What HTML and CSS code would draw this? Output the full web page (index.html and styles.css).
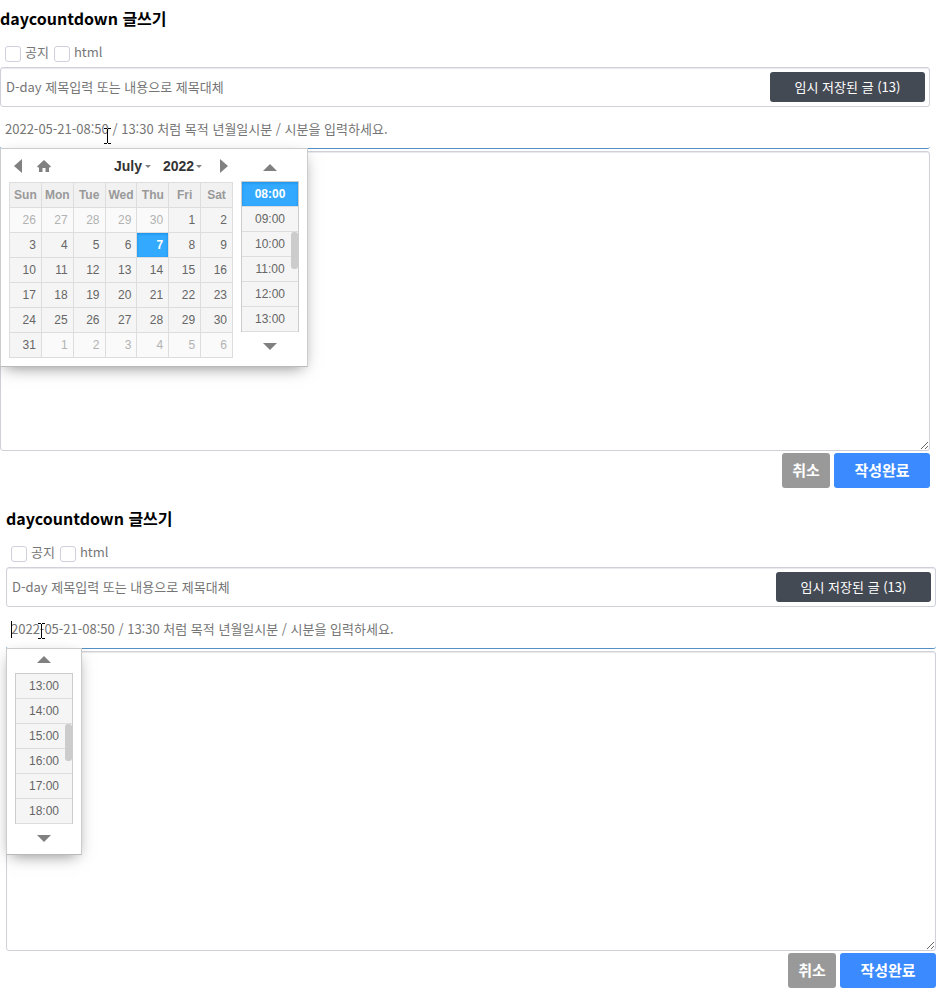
FILE: index.html
```html
<!DOCTYPE html>
<html lang="ko">
<head>
  <meta charset="UTF-8" />
  <meta name="viewport" content="width=device-width, initial-scale=1.0"/>
  <title>daycountdown 글쓰기</title>
  <link rel="stylesheet" href="styles.css">
</head>
<body>

<form class="write-form">
  <h1>daycountdown 글쓰기</h1>

  <div class="options">
    <label><input type="checkbox" name="notice"> 공지</label>
    <label><input type="checkbox" name="html"> html</label>
  </div>

  <div class="subject">
    <input type="text" name="subject" aria-label="제목" placeholder="D-day 제목입력 또는 내용으로 제목대체">
    <button type="button" class="btn-saved">임시 저장된 글 (13)</button>
  </div>

  <div class="date-field">
    <input type="text" name="dday" aria-label="목적 시간" placeholder="2022-05-21-08:50 / 13:30 처럼 목적 년월일시분 / 시분을 입력하세요.">
    <svg class="pointer pointer-date" width="7" height="16" viewBox="0 0 7 16"><path d="M0 .5h3M4 .5h3M3.500 1v14M0 15.500h3M4 15.500h3" stroke="#000" fill="none"/></svg>

    <div class="picker">
      <div class="datepicker">
        <div class="month-bar">
          <button type="button" class="icon-btn" aria-label="Previous month">
            <svg width="8" height="14" viewBox="0 0 8 14"><path d="M8 0v14L0 7z"/></svg>
          </button>
          <button type="button" class="icon-btn home" aria-label="Today">
            <svg width="14" height="12" viewBox="0 0 14 12"><path d="M7 0l7 6.500-1.200 1.200L12 7v5H8.500V8h-3v4H2V7l-.8.7L0 6.500z"/></svg>
          </button>
          <span class="drop month">
            <select aria-label="Month"><option>July</option></select>
            <svg width="6" height="3" viewBox="0 0 6 3"><path d="M0 0h6L3 3z"/></svg>
          </span>
          <span class="drop year">
            <select aria-label="Year"><option>2022</option></select>
            <svg width="6" height="3" viewBox="0 0 6 3"><path d="M0 0h6L3 3z"/></svg>
          </span>
          <button type="button" class="icon-btn next" aria-label="Next month">
            <svg width="8" height="14" viewBox="0 0 8 14"><path d="M0 0v14l8-7z"/></svg>
          </button>
        </div>
        <table class="calendar">
          <thead>
            <tr><th>Sun</th><th>Mon</th><th>Tue</th><th>Wed</th><th>Thu</th><th>Fri</th><th>Sat</th></tr>
          </thead>
          <tbody id="days"></tbody>
        </table>
      </div>
      <div class="timepicker">
        <button type="button" class="icon-btn scroll-btn" aria-label="Earlier">
          <svg width="14" height="7" viewBox="0 0 14 7"><path d="M0 7h14L7 0z"/></svg>
        </button>
        <div class="times" data-from="8" data-current="8"></div>
        <button type="button" class="icon-btn scroll-btn" aria-label="Later">
          <svg width="14" height="7" viewBox="0 0 14 7"><path d="M0 0h14L7 7z"/></svg>
        </button>
      </div>
    </div>
  </div>

  <textarea name="content" aria-label="내용"></textarea>

  <div class="actions">
    <button type="button" class="btn btn-cancel">취소</button>
    <button type="button" class="btn btn-submit">작성완료</button>
  </div>
</form>

<form class="write-form shifted">
  <h1>daycountdown 글쓰기</h1>

  <div class="options">
    <label><input type="checkbox" name="notice"> 공지</label>
    <label><input type="checkbox" name="html"> html</label>
  </div>

  <div class="subject">
    <input type="text" name="subject" aria-label="제목" placeholder="D-day 제목입력 또는 내용으로 제목대체">
    <button type="button" class="btn-saved">임시 저장된 글 (13)</button>
  </div>

  <div class="date-field">
    <input type="text" name="dday" aria-label="목적 시간" placeholder="2022-05-21-08:50 / 13:30 처럼 목적 년월일시분 / 시분을 입력하세요.">
    <span class="caret"></span>
    <svg class="pointer pointer-time" width="7" height="16" viewBox="0 0 7 16"><path d="M0 .5h3M4 .5h3M3.500 1v14M0 15.500h3M4 15.500h3" stroke="#000" fill="none"/></svg>

    <div class="picker time-only">
      <div class="timepicker">
        <button type="button" class="icon-btn scroll-btn" aria-label="Earlier">
          <svg width="14" height="7" viewBox="0 0 14 7"><path d="M0 7h14L7 0z"/></svg>
        </button>
        <div class="times" data-from="13"></div>
        <button type="button" class="icon-btn scroll-btn" aria-label="Later">
          <svg width="14" height="7" viewBox="0 0 14 7"><path d="M0 0h14L7 7z"/></svg>
        </button>
      </div>
    </div>
  </div>

  <textarea name="content" aria-label="내용"></textarea>

  <div class="actions">
    <button type="button" class="btn btn-cancel">취소</button>
    <button type="button" class="btn btn-submit">작성완료</button>
  </div>
</form>

<script>
  function drawCalendar(year, month, current) {
    const body = document.getElementById("days");
    const first = new Date(year, month, 1);
    const last = new Date(year, month + 1, 0).getDate();
    const weeks = Math.ceil((first.getDay() + last) / 7);

    for (let w = 0; w < weeks; w++) {
      const row = body.insertRow();
      for (let d = 0; d < 7; d++) {
        const day = new Date(year, month, 1 - first.getDay() + w * 7 + d);
        const cell = row.insertCell();
        const button = document.createElement("button");
        button.type = "button";
        button.textContent = day.getDate();
        cell.appendChild(button);
        if (day.getMonth() !== month) cell.className = "other";
        else if (day.getDate() === current) cell.className = "current";
      }
    }
  }

  function drawTimes(box) {
    const from = Number(box.dataset.from);
    for (let h = from; h < from + 6; h++) {
      const button = document.createElement("button");
      button.type = "button";
      button.textContent = String(h).padStart(2, "0") + ":00";
      if (h === Number(box.dataset.current)) button.className = "current";
      box.appendChild(button);
    }
    const thumb = document.createElement("span");
    thumb.className = "thumb";
    box.appendChild(thumb);
  }

  drawCalendar(2022, 6, 7);
  document.querySelectorAll(".times").forEach(drawTimes);
</script>

</body>
</html>
```
FILE: styles.css
```css
* {
  box-sizing: border-box;
}

body {
  margin: 0;
  background: #fff;
  color: #777;
  font-family: "Noto Sans CJK KR", sans-serif;
  font-size: 13px;
  line-height: 18px;
}

button,
input,
select,
textarea {
  font: inherit;
  margin: 0;
}

button {
  cursor: pointer;
  border: none;
  padding: 0;
}

.write-form {
  margin-right: 7px;
  padding-bottom: 12px;
}

.write-form.shifted {
  margin-left: 6px;
  margin-right: 1px;
}

h1 {
  margin: 0;
  padding: 6px 0 8px;
  color: #000;
  font-size: 16px;
  line-height: 24px;
}

.options {
  display: flex;
  gap: 5px;
  padding: 5px 5px;
}

.options label {
  display: flex;
  gap: 4px;
}

.options input {
  appearance: none;
  width: 16px;
  height: 16px;
  margin-top: 3px;
  border: 1px solid #cfcfdd;
  border-radius: 3px;
  background: #fff;
}

.subject {
  display: flex;
  align-items: center;
  height: 40px;
  padding: 3px 4px 4px;
  border: 1px solid #d0d0da;
  border-radius: 3px;
  box-shadow: inset 0 1px 1px #e8e8ee;
}

.subject input {
  flex: 1;
  min-width: 0;
  padding: 0 1px;
  border: none;
  outline: none;
  background: none;
}

input::placeholder {
  color: #757575;
}

.btn-saved {
  width: 155px;
  height: 30px;
  border-radius: 3px;
  background: #444a54;
  color: #fff;
}

.date-field {
  position: relative;
  margin: 2px 0;
}

.date-field > input {
  display: block;
  width: 100%;
  height: 40px;
  padding: 0 5px;
  border: none;
  border-bottom: 1px solid #5490c5;
  border-radius: 3px;
  outline: none;
}

textarea {
  display: block;
  width: 100%;
  height: 300px;
  padding: 5px;
  border: 1px solid #d0d0da;
  border-radius: 3px;
  box-shadow: inset 0 1px 1px #e8e8ee;
  outline: none;
  resize: both;
}

.actions {
  display: flex;
  justify-content: flex-end;
  gap: 4px;
  margin-top: 2px;
}

.btn {
  height: 35px;
  padding-bottom: 2px;
  border-radius: 3px;
  color: #fff;
  font-size: 15px;
  font-weight: bold;
}

.btn-cancel {
  width: 48px;
  background: #999;
}

.btn-submit {
  width: 96px;
  background: #3b8aff;
}

/* date / time popup */
.picker {
  position: absolute;
  top: 39px;
  left: 0;
  z-index: 10;
  display: flex;
  gap: 8px;
  padding: 8px;
  border: 1px solid #ccc;
  border-bottom-color: #bbb;
  background: #fff;
  box-shadow: 0 5px 15px -5px rgba(0, 0, 0, 0.5);
  color: #666;
  font-family: "Liberation Sans", Arial, sans-serif;
  font-size: 12px;
}

.picker.time-only {
  padding: 0 8px 6px;
}

.picker button {
  color: inherit;
}

.icon-btn {
  display: flex;
  align-items: center;
  justify-content: center;
  background: none;
}

.icon-btn svg,
.drop svg {
  fill: #808080;
}

.month-bar {
  display: flex;
  align-items: center;
  height: 18px;
  margin-bottom: 7px;
  padding: 0 5px;
}

.home {
  margin-left: 15px;
}

.drop {
  display: flex;
  align-items: center;
  gap: 1px;
}

.drop select {
  appearance: none;
  width: 30px;
  padding: 0;
  border: none;
  background: none;
  color: #333;
  font-size: 14px;
  font-weight: bold;
}

.drop.month {
  margin-left: auto;
}

.drop.year {
  margin-left: 12px;
}

.drop.year select {
  width: 32px;
}

.next {
  margin-left: 18px;
}

.calendar {
  width: 224px;
  table-layout: fixed;
  border-collapse: collapse;
}

.calendar th,
.calendar td {
  height: 25px;
  padding: 0;
  border: 1px solid #ddd;
  background: #f5f5f5;
}

.calendar th {
  background: #f1f1f1;
  color: #999;
}

.calendar button {
  display: block;
  width: 100%;
  height: 24px;
  padding-right: 5px;
  background: none;
  text-align: right;
}

.calendar .other {
  background: #fafafa;
  color: #b2b2b2;
}

.calendar .current,
.times .current {
  background: #33aaff;
  box-shadow: inset 0 1px 3px #178fe5;
  color: #fff;
  font-weight: bold;
}

.timepicker {
  width: 58px;
}

.scroll-btn {
  width: 100%;
  height: 20px;
}

.times {
  position: relative;
  margin: 4px 0;
  border: 1px solid #ccc;
  border-bottom: none;
}

.times button {
  display: block;
  width: 100%;
  height: 25px;
  border-bottom: 1px solid #ddd;
  background: #f5f5f5;
}

.times .current {
  background: #33aaff;
}

.picker .current button,
.times button.current {
  color: #fff;
}

.thumb {
  position: absolute;
  top: 50px;
  right: 0;
  width: 7px;
  height: 37px;
  border-radius: 3px;
  background: #ccc;
}

/* text cursor over the date field */
.pointer {
  position: absolute;
}

.pointer-date {
  top: 19px;
  left: 104px;
}

.pointer-time {
  top: 14px;
  left: 32px;
}

.caret {
  position: absolute;
  top: 12px;
  left: 5px;
  width: 1px;
  height: 17px;
  background: #000;
}
```
